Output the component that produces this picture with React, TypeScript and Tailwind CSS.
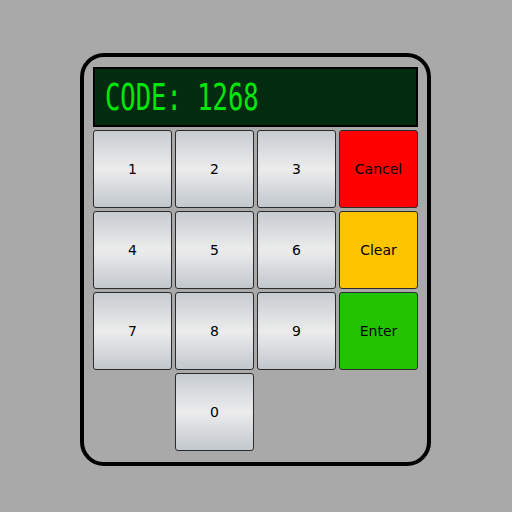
import React from 'react';

type Key = { label: string; kind: 'digit' | 'cancel' | 'clear' | 'enter' | 'empty' };

const keys: Key[] = [
  { label: '1', kind: 'digit' },
  { label: '2', kind: 'digit' },
  { label: '3', kind: 'digit' },
  { label: 'Cancel', kind: 'cancel' },
  { label: '4', kind: 'digit' },
  { label: '5', kind: 'digit' },
  { label: '6', kind: 'digit' },
  { label: 'Clear', kind: 'clear' },
  { label: '7', kind: 'digit' },
  { label: '8', kind: 'digit' },
  { label: '9', kind: 'digit' },
  { label: 'Enter', kind: 'enter' },
  { label: '', kind: 'empty' },
  { label: '0', kind: 'digit' },
];

const kindClass: Record<Key['kind'], string> = {
  digit: 'bg-linear-to-b from-[#c7ccd1] via-[#ececec] to-[#c2c8ce]',
  cancel: 'bg-[#ff0000]',
  clear: 'bg-[#ffc400]',
  enter: 'bg-[#22c400]',
  empty: '',
};

export default function App() {
  return (
    <div className="w-full h-screen bg-[#a9a9a9] pl-[80px] pt-[53px]" style={{ fontFamily: '"DejaVu Sans", Verdana, sans-serif' }}>
      <div className="w-[351px] h-[413px] border-4 border-black rounded-[24px] bg-[#a9a9a9] px-[9px] pt-[10px] flex flex-col gap-[3px]">
        {/* LCD display */}
        <div className="h-[60px] bg-[#032b10] border-2 border-black flex items-center pl-[10px] overflow-hidden">
          <span
            className="text-[37px] leading-none text-[#00e80a] scale-x-[0.69] origin-left whitespace-pre"
            style={{ fontFamily: '"DejaVu Sans Mono", "Liberation Mono", monospace' }}
          >
            CODE: 1268
          </span>
        </div>

        {/* Keypad */}
        <div className="grid grid-cols-4 grid-rows-[repeat(4,78px)] gap-[3px]">
          {keys.map((k, i) =>
            k.kind === 'empty' ? (
              <div key={i} />
            ) : (
              <button
                key={i}
                className={`rounded-[3px] border border-[#2b2b2b] text-[14px] text-black flex items-center justify-center ${kindClass[k.kind]}`}
              >
                {k.label}
              </button>
            )
          )}
        </div>
      </div>
    </div>
  );
}
